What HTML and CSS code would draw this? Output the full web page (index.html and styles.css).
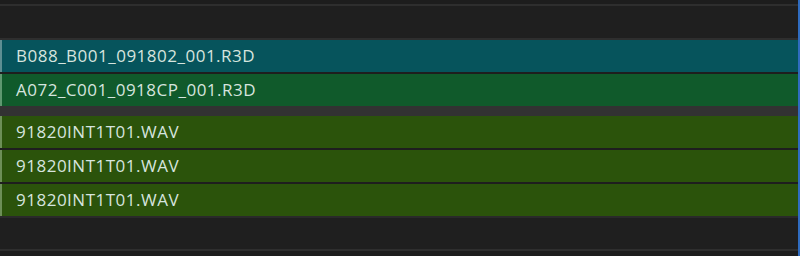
FILE: index.html
```html
<!DOCTYPE html>
<html lang="en">

<head>
    <title>Media Pool</title>
    <link rel="stylesheet" href="styles.css">
</head>

<body>
    <div class="panel">
        <div class="tracks">
            <div class="top-strip"></div>
            <div class="empty-lane"></div>

            <div class="clip video-a">B088_B001_091802_001.R3D</div>
            <div class="clip video-b">A072_C001_0918CP_001.R3D</div>

            <div class="group-gap"></div>

            <div class="clip audio">91820INT1T01.WAV</div>
            <div class="clip audio">91820INT1T01.WAV</div>
            <div class="clip audio last">91820INT1T01.WAV</div>

            <div class="empty-lane bottom"></div>
            <div class="bottom-strip"></div>
        </div>
        <div class="scroll-edge"></div>
    </div>
</body>

</html>
```

FILE: styles.css
```css
body {
    margin: 0;
    padding: 0;
    background-color: #1e1e1e;
    font-family: "Open Sans", "Noto Sans", sans-serif;
}

.panel {
    display: flex;
    width: 800px;
    height: 256px;
    overflow: hidden;
}

.tracks {
    flex: 1;
    display: flex;
    flex-direction: column;
}

.top-strip {
    height: 4px;
    background-color: #1d1d1d;
    border-bottom: 2px solid #2e2e2e;
}

.empty-lane {
    height: 32px;
    background-color: #1f1f1f;
    border-bottom: 2px solid #2e2e2e;
}

.empty-lane.bottom {
    height: 31px;
    border-top: 2px solid #2a2a2a;
}

.bottom-strip {
    flex: 1;
    background-color: #1d1d1d;
}

.clip {
    height: 32px;
    line-height: 32px;
    padding-left: 14px;
    font-size: 17px;
    letter-spacing: 0.5px;
    color: #d6e4df;
    border-left: 2px solid;
    margin-bottom: 2px;
    box-sizing: border-box;
    width: 100%;
}

.video-a {
    background-color: #06545c;
    border-left-color: #5d8f93;
}

.video-b {
    background-color: #105a2b;
    border-left-color: #5f9870;
    margin-bottom: 0;
}

.audio {
    background-color: #2b530b;
    border-left-color: #6d8f57;
}

.audio.last {
    margin-bottom: 0;
}

.group-gap {
    height: 10px;
    background-color: #323232;
}

.scroll-edge {
    width: 2px;
    background-color: #2f6cc0;
}
```
